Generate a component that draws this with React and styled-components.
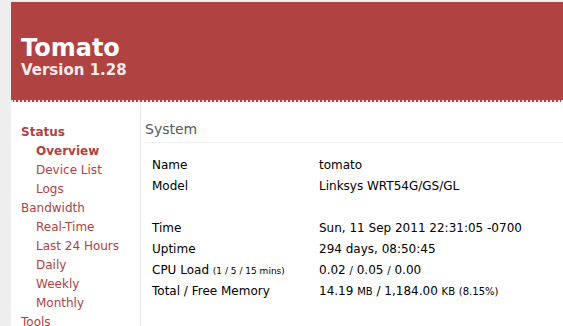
import React from 'react';
import styled, { createGlobalStyle } from 'styled-components';

const GlobalStyle = createGlobalStyle`
  html, body {
    margin: 0;
    padding: 0;
    background: #eeeeee;
    font-family: "DejaVu Sans", Verdana, sans-serif;
    font-size: 12px;
    color: #000;
  }
`;

const Page = styled.div`
  padding: 2px 0 0 11px;
  min-height: 100vh;
  box-sizing: border-box;
`;

const Container = styled.div`
  background: #fff;
  min-height: 400px;
`;

const Header = styled.div`
  box-sizing: content-box;
  height: 66px;
  padding: 32px 0 0 10px;
  background: #b04242;
  border-bottom: 2px dotted #e6e6e6;
  color: #fff;
`;

const Title = styled.div`
  font-size: 24px;
  line-height: 28px;
  font-weight: bold;
`;

const Version = styled.div`
  font-size: 15px;
  line-height: 17px;
  font-weight: bold;
  color: #f4eaea;
`;

const Body = styled.div`
  display: flex;
  align-items: stretch;
`;

const Navi = styled.div`
  width: 129px;
  flex-shrink: 0;
  padding-top: 21px;
  border-right: 1px solid #e8e8e8;
  min-height: 260px;
`;

const NavItem = styled.div`
  line-height: 19px;
  padding-left: ${p => (p.$sub ? 25 : 10)}px;
  color: #b04242;
  font-weight: ${p => (p.$bold ? 'bold' : 'normal')};
  white-space: nowrap;
`;

const Content = styled.div`
  flex: 1;
  padding: 18px 0 0 4px;
`;

const SectionTitle = styled.div`
  font-size: 14px;
  line-height: 18px;
  color: #555a60;
  padding-bottom: 4px;
  border-bottom: 1px solid #eeeeee;
`;

const Section = styled.div`
  margin-bottom: 21px;
`;

const Grid = styled.div`
  display: grid;
  grid-template-columns: 167px 1fr;
  padding: 12px 0 0 7px;
`;

const Cell = styled.div`
  line-height: 21px;
  height: 21px;
  white-space: nowrap;
`;

const Small = styled.small`
  font-size: ${p => p.$size || 10}px;
`;

const navItems = [
  { label: 'Status', bold: true },
  { label: 'Overview', sub: true, bold: true },
  { label: 'Device List', sub: true },
  { label: 'Logs', sub: true },
  { label: 'Bandwidth' },
  { label: 'Real-Time', sub: true },
  { label: 'Last 24 Hours', sub: true },
  { label: 'Daily', sub: true },
  { label: 'Weekly', sub: true },
  { label: 'Monthly', sub: true },
  { label: 'Tools' },
];

const systemRows = [
  ['Name', 'tomato'],
  ['Model', 'Linksys WRT54G/GS/GL'],
  ['', ''],
  ['Time', 'Sun, 11 Sep 2011 22:31:05 -0700'],
  ['Uptime', '294 days, 08:50:45'],
  [
    <>CPU Load <Small $size={9}>(1 / 5 / 15 mins)</Small></>,
    <>0.02 <Small>/</Small> 0.05 <Small>/</Small> 0.00</>,
  ],
  [
    'Total / Free Memory',
    <>14.19 <Small>MB</Small> / 1,184.00 <Small>KB</Small> <Small>(8.15%)</Small></>,
  ],
];

export default function App() {
  return (
    <>
      <GlobalStyle />
      <Page>
        <Container>
          <Header>
            <Title>Tomato</Title>
            <Version>Version 1.28</Version>
          </Header>
          <Body>
            <Navi>
              {navItems.map(item => (
                <NavItem key={item.label} $sub={item.sub} $bold={item.bold}>
                  {item.label}
                </NavItem>
              ))}
            </Navi>
            <Content>
              <Section>
                <SectionTitle>System</SectionTitle>
                <Grid>
                  {systemRows.map(([label, value], i) => (
                    <React.Fragment key={i}>
                      <Cell>{label}</Cell>
                      <Cell>{value}</Cell>
                    </React.Fragment>
                  ))}
                </Grid>
              </Section>
              <Section>
                <SectionTitle>WAN</SectionTitle>
              </Section>
            </Content>
          </Body>
        </Container>
      </Page>
    </>
  );
}
